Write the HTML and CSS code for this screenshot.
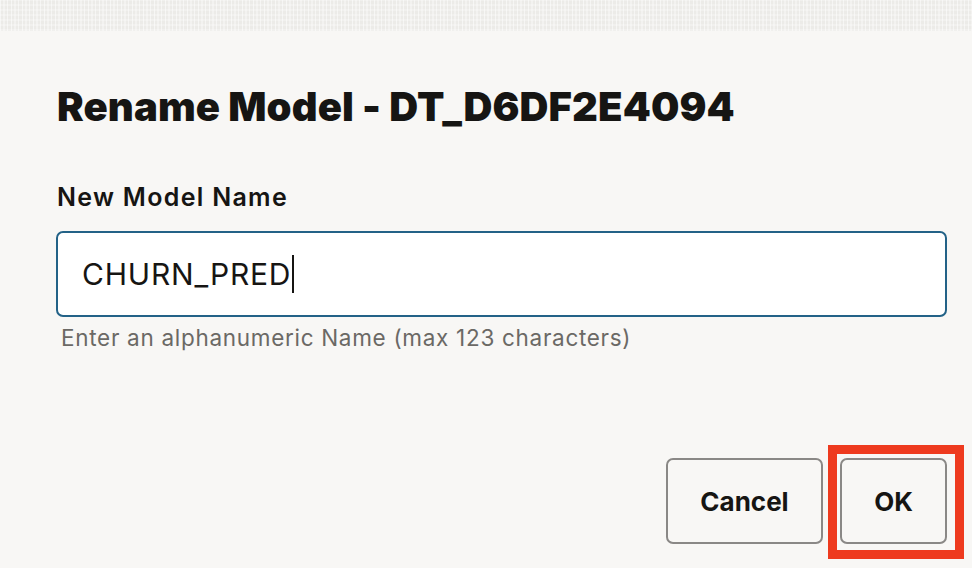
FILE: index.html
```html
<!DOCTYPE html>
<html lang="en">
<head>
<meta charset="utf-8">
<title>Rename Model</title>
<link rel="stylesheet" href="styles.css">
</head>
<body>
<div class="backdrop"></div>
<div class="dialog">
  <h1 class="title">Rename Model - DT_D6DF2E4094</h1>
  <label class="label" for="name">New Model Name</label>
  <div class="field">
    <span class="value">CHURN_PRED</span><span class="caret"></span>
  </div>
  <div class="help">Enter an alphanumeric Name (max 123 characters)</div>
  <div class="actions">
    <button class="btn btn-cancel">Cancel</button>
    <div class="highlight-wrap">
      <button class="btn btn-ok">OK</button>
      <span class="highlight"></span>
    </div>
  </div>
</div>
</body>
</html>
```
FILE: styles.css
```css
html, body {
  margin: 0;
  padding: 0;
}
body {
  background: #f8f7f5;
  font-family: Inter, "Noto Sans", sans-serif;
  color: #161513;
  width: 972px;
  height: 568px;
  overflow: hidden;
}
.backdrop {
  height: 31px;
  background-color: #ecebe8;
  background-image:
    repeating-linear-gradient(90deg, rgba(255,255,255,0.55) 0 1px, transparent 1px 3px, rgba(255,255,255,0.35) 3px 5px, transparent 5px 7px, rgba(255,255,255,0.5) 7px 8px, transparent 8px 11px),
    repeating-linear-gradient(0deg, rgba(255,255,255,0.25) 0 2px, transparent 2px 5px);
}
.dialog {
  padding: 0 25px 0 56px;
  display: flex;
  flex-direction: column;
}
.title {
  margin: 52px 0 0 1px;
  font-size: 40px;
  line-height: 48px;
  font-weight: 900;
  letter-spacing: 0.12px;
}
.label {
  margin-top: 51px;
  margin-left: 1px;
  font-size: 25px;
  line-height: 30px;
  font-weight: 600;
  letter-spacing: 1.3px;
}
.field {
  margin-top: 19px;
  height: 82px;
  border: 2px solid #236287;
  border-radius: 7px;
  background: #ffffff;
  display: flex;
  align-items: center;
  padding-left: 24px;
}
.value {
  font-size: 30px;
  line-height: 36px;
  font-weight: 400;
  letter-spacing: 0.8px;
  color: #161513;
}
.caret {
  display: inline-block;
  width: 2px;
  height: 38px;
  background: #161513;
  margin-left: 1px;
}
.help {
  margin-top: 7px;
  margin-left: 5px;
  font-size: 22.5px;
  line-height: 28px;
  letter-spacing: 0.7px;
  color: #6b6965;
}
.actions {
  margin-top: 106px;
  display: flex;
  justify-content: flex-end;
  gap: 17px;
}
.btn {
  height: 86px;
  border: 2px solid #8a8886;
  border-radius: 7px;
  background: #f8f7f5;
  font-family: Inter, "Noto Sans", sans-serif;
  font-size: 26px;
  font-weight: 700;
  color: #161513;
  padding: 0;
}
.btn-cancel {
  width: 157px;
}
.btn-ok {
  width: 107px;
  display: block;
}
.highlight-wrap {
  position: relative;
}
.highlight {
  position: absolute;
  left: -12px;
  top: -13px;
  right: -17px;
  bottom: -15px;
  border: 9px solid #ee3a1e;
  pointer-events: none;
}
```
